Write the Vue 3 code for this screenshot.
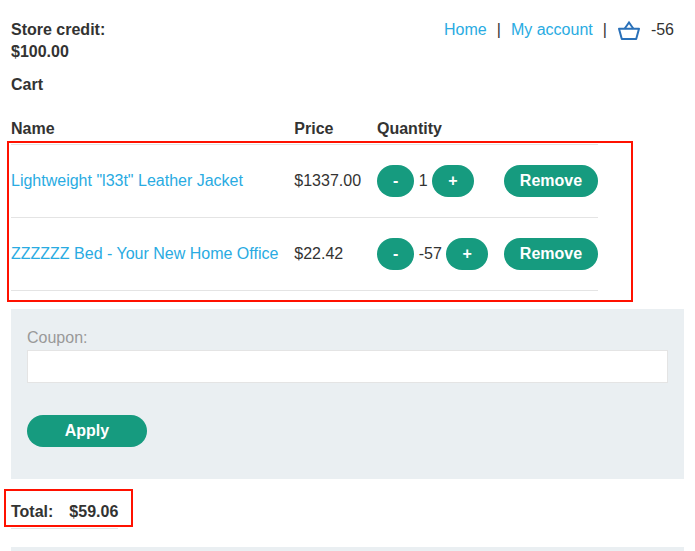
<script setup>
const items = [
  { name: 'Lightweight "l33t" Leather Jacket', price: '$1337.00', qty: '1' },
  { name: 'ZZZZZZ Bed - Your New Home Office', price: '$22.42', qty: '-57' },
]
</script>

<template>
  <main class="page">
    <header class="top">
      <div class="credit">Store credit:<br />$100.00</div>
      <nav class="nav">
        <a class="link">Home</a>
        <span>|</span>
        <a class="link">My account</a>
        <span>|</span>
        <span class="basket">
          <svg width="24" height="22" viewBox="0 0 24 22" fill="none" stroke="#2a71b9" stroke-width="2">
            <path d="M2 9.7H22L19.2 20H4.8Z" stroke-linejoin="round" />
            <path d="M7.6 9.7L12 3.4L16.4 9.7" />
          </svg>
          <span>-56</span>
        </span>
      </nav>
    </header>
    <h1 class="title">Cart</h1>
    <section class="cart">
      <div class="row head">
        <span>Name</span><span>Price</span><span>Quantity</span><span></span>
      </div>
      <div v-for="item in items" :key="item.name" class="row item">
        <a class="link">{{ item.name }}</a>
        <span>{{ item.price }}</span>
        <div class="qty">
          <button class="btn minus">-</button>
          <span>{{ item.qty }}</span>
          <button class="btn plus">+</button>
        </div>
        <button class="btn remove">Remove</button>
      </div>
      <div class="mark mark-items"></div>
    </section>
    <form class="coupon" @submit.prevent>
      <label class="label" for="coupon">Coupon:</label>
      <input id="coupon" class="field" type="text" />
      <button class="btn apply">Apply</button>
    </form>
    <div class="total">
      <span>Total:</span><span>$59.06</span>
      <div class="mark mark-total"></div>
    </div>
    <div class="next"></div>
  </main>
</template>

<style>
body {
  margin: 0;
  background: #fff;
}
</style>

<style scoped>
.page {
  box-sizing: border-box;
  height: 551px;
  overflow: hidden;
  padding: 19px 11px 0;
  font: 16px/22px "Liberation Sans", Arial, sans-serif;
  color: #333332;
}
.top {
  display: flex;
  justify-content: space-between;
  height: 44px;
}
.credit,
.title,
.head,
.total {
  font-weight: 700;
}
.nav {
  display: flex;
  gap: 10px;
  height: 22px;
  padding-right: 10px;
}
.basket {
  display: flex;
  gap: 10px;
}
.basket svg {
  display: block;
}
.link {
  color: #29abe2;
}
.title {
  margin: 11px 0 0;
  font-size: 16px;
  line-height: 22px;
}
.cart {
  position: relative;
  width: 587px;
  margin-top: 17px;
}
.row {
  display: grid;
  grid-template-columns: 283.3px 82.7px 127px 94px;
  align-items: center;
  border-bottom: 1px solid #e4e4e4;
}
.head {
  height: 31px;
}
.item {
  height: 72px;
}
.qty {
  display: flex;
  align-items: center;
  gap: 4.4px;
}
.btn {
  height: 32px;
  padding: 0;
  border: 0;
  border-radius: 16px;
  background: #169b7f;
  color: #fff;
  font: 700 16px/22px "Liberation Sans", Arial, sans-serif;
}
.minus {
  width: 37.3px;
}
.plus {
  width: 41.9px;
}
.remove {
  width: 94px;
}
.mark {
  position: absolute;
  box-sizing: border-box;
  border: 2px solid #ff1100;
}
.mark-items {
  left: -4px;
  top: 28px;
  width: 626px;
  height: 161px;
}
.coupon {
  box-sizing: border-box;
  height: 170px;
  margin-top: 18px;
  padding: 18px 16px 0;
  background: #eaeff2;
}
.label {
  display: block;
  height: 23px;
  color: #999;
}
.field {
  display: block;
  box-sizing: border-box;
  width: 100%;
  height: 33px;
  margin-bottom: 32px;
  border: 1px solid #e4e4e4;
  border-radius: 0;
  outline: 0;
  background: #fff;
}
.apply {
  display: block;
  width: 120px;
}
.total {
  position: relative;
  display: flex;
  gap: 16px;
  width: 107px;
  height: 27px;
  margin-top: 22px;
  border-bottom: 1px solid #e4e4e4;
}
.mark-total {
  left: -7px;
  top: -12px;
  width: 129px;
  height: 38px;
}
.next {
  height: 20px;
  margin-top: 18px;
  background: #eaeff2;
}
</style>
